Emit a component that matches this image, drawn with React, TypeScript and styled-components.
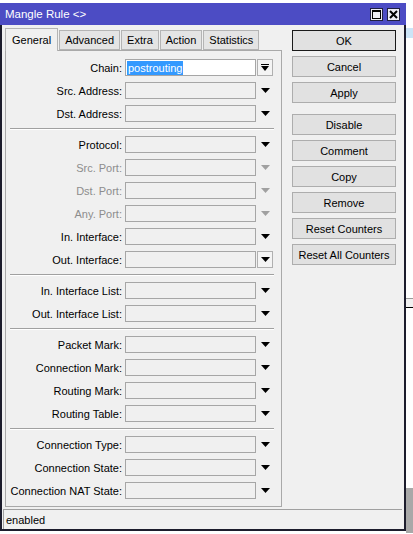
import React from 'react';
import styled, { createGlobalStyle } from 'styled-components';

const GlobalStyle = createGlobalStyle`
  html, body {
    margin: 0;
    padding: 0;
    background: #ffffff;
  }
  body {
    font-family: "Liberation Sans", Arial, sans-serif;
    font-size: 11px;
    color: #000;
  }
`;

const Page = styled.div`
  display: flex;
  flex-direction: row;
  align-items: flex-start;
  width: 413px;
  height: 534px;
  padding-top: 3px;
  box-sizing: border-box;
  overflow: hidden;
`;

const Window = styled.div`
  width: 406px;
  height: 528px;
  flex: none;
  display: flex;
  flex-direction: column;
  background: #f0f0f0;
  border: 2px solid #1c1c2c;
  border-top: none;
  box-sizing: border-box;
`;

const BackStrip = styled.div`
  flex: 1;
  display: flex;
  flex-direction: column;
  height: 531px;
`;

const StripPart = styled.div`
  height: ${({ $h }) => `${$h}px`};
  background: ${({ $bg }) => $bg};
  border-bottom: ${({ $line }) => ($line ? `1px solid ${$line}` : 'none')};
`;

const TitleBar = styled.div`
  height: 22px;
  flex: none;
  display: flex;
  align-items: center;
  justify-content: space-between;
  padding: 0 6px 0 5px;
  margin: 0 -2px;
  background: #4c4cc4;
  color: #fff;
  font-size: 11.5px;
`;

const TitleButtons = styled.div`
  display: flex;
  gap: 4px;
`;

const TitleButton = styled.div`
  width: 11px;
  height: 11px;
  background: #ececf4;
  border: 1px solid #202040;
  display: flex;
  align-items: center;
  justify-content: center;
`;

const Body = styled.div`
  flex: 1;
  display: flex;
  flex-direction: row;
  padding: 3px 8px 0 3px;
  gap: 10px;
`;

const LeftColumn = styled.div`
  width: 277px;
  display: flex;
  flex-direction: column;
`;

const TabStrip = styled.div`
  display: flex;
  align-items: flex-end;
  height: 22px;
`;

const Tab = styled.div`
  height: ${({ $active }) => ($active ? '23px' : '20px')};
  padding: 0 ${({ $active }) => ($active ? '6px' : '5px')};
  display: flex;
  align-items: center;
  box-sizing: border-box;
  background: ${({ $active }) => ($active ? '#f0f0f0' : '#e4e4e4')};
  border: 1px solid #b4b4b4;
  border-bottom: ${({ $active }) => ($active ? 'none' : '1px solid #b4b4b4')};
  margin-left: ${({ $active }) => ($active ? '0' : '1px')};
  position: relative;
  z-index: ${({ $active }) => ($active ? 2 : 1)};
  margin-bottom: ${({ $active }) => ($active ? '-1px' : '0')};
  font-size: 11px;
`;

const Panel = styled.div`
  height: 457px;
  box-sizing: border-box;
  border: 1px solid #a9a9a9;
  padding-top: 8px;
  display: flex;
  flex-direction: column;
`;

const Section = styled.div`
  display: flex;
  flex-direction: column;
  gap: 6px;
`;

const Separator = styled.div`
  margin: 6px 0 6px 4px;
  width: 264px;
  height: 1px;
  background: #a0a0a0;
  border-bottom: 1px solid #ffffff;
`;

const Row = styled.div`
  display: flex;
  align-items: center;
  height: 17px;
`;

const Label = styled.div`
  width: 119px;
  text-align: right;
  padding-right: 3px;
  box-sizing: border-box;
  white-space: nowrap;
  font-size: 11px;
  color: ${({ $disabled }) => ($disabled ? '#8d8d8d' : '#000')};
`;

const Input = styled.div`
  width: 131px;
  height: 17px;
  box-sizing: border-box;
  border: 1px solid #a6a6a6;
  background: ${({ $white }) => ($white ? '#ffffff' : '#f0f0f0')};
  display: flex;
  align-items: center;
  padding-left: 1px;
`;

const Selected = styled.span`
  background: #3399ff;
  color: #fff;
  font-size: 11px;
  line-height: 14px;
  padding: 0 1px;
`;

const ArrowCell = styled.div`
  height: 17px;
  display: flex;
  align-items: center;
  justify-content: center;
  margin-left: ${({ $boxed }) => ($boxed ? '1px' : '0')};
  box-sizing: border-box;
  border: ${({ $boxed }) => ($boxed ? '1px solid #b0b0b0' : 'none')};
  width: ${({ $boxed }) => ($boxed ? '16px' : '18px')};
  background: ${({ $boxed }) => ($boxed ? '#f4f4f4' : 'transparent')};
`;

const ButtonColumn = styled.div`
  width: 104px;
  display: flex;
  flex-direction: column;
  gap: 5px;
  padding-top: 2px;
`;

const Button = styled.div`
  height: 21px;
  box-sizing: border-box;
  display: flex;
  align-items: center;
  justify-content: center;
  background: #e1e1e1;
  border: 1px solid ${({ $default }) => ($default ? '#1a1a1a' : '#adadad')};
  margin-top: ${({ $gapBefore }) => ($gapBefore ? '6px' : '0')};
  font-size: 11px;
`;

const StatusBar = styled.div`
  height: 20px;
  flex: none;
  display: flex;
  align-items: center;
  margin: 1px 2px 0 1px;
  padding-left: 2px;
  border-top: 1px solid #a0a0a0;
  border-left: 1px solid #a0a0a0;
  box-sizing: border-box;
  font-size: 11px;
`;

const Arrow = ({ color = '#000' }) => (
  <svg width="9" height="5" viewBox="0 0 9 5">
    <polygon points="0,0 9,0 4.5,5" fill={color} />
  </svg>
);

const BarArrow = () => (
  <svg width="8" height="8" viewBox="0 0 8 8">
    <rect x="0" y="0" width="8" height="1" fill="#000" />
    <polygon points="0,2 8,2 4,7" fill="#000" />
  </svg>
);

const sections = [
  [
    { label: 'Chain', value: 'postrouting', chain: true },
    { label: 'Src. Address' },
    { label: 'Dst. Address' },
  ],
  [
    { label: 'Protocol' },
    { label: 'Src. Port', disabled: true },
    { label: 'Dst. Port', disabled: true },
    { label: 'Any. Port', disabled: true },
    { label: 'In. Interface' },
    { label: 'Out. Interface', boxed: true },
  ],
  [{ label: 'In. Interface List' }, { label: 'Out. Interface List' }],
  [
    { label: 'Packet Mark' },
    { label: 'Connection Mark' },
    { label: 'Routing Mark' },
    { label: 'Routing Table' },
  ],
  [
    { label: 'Connection Type' },
    { label: 'Connection State' },
    { label: 'Connection NAT State' },
  ],
];

const tabs = ['General', 'Advanced', 'Extra', 'Action', 'Statistics'];

const buttons = [
  'OK',
  'Cancel',
  'Apply',
  'Disable',
  'Comment',
  'Copy',
  'Remove',
  'Reset Counters',
  'Reset All Counters',
];

const App = () => {
  return (
    <>
      <GlobalStyle />
      <Page>
        <Window>
          <TitleBar>
            <span>Mangle Rule &lt;&gt;</span>
            <TitleButtons>
              <TitleButton>
                <svg width="9" height="9" viewBox="0 0 9 9">
                  <rect x="0.5" y="0.5" width="8" height="8" fill="none" stroke="#000" />
                  <rect x="0" y="0" width="9" height="2" fill="#000" />
                </svg>
              </TitleButton>
              <TitleButton>
                <svg width="9" height="9" viewBox="0 0 9 9">
                  <path d="M1 1 L8 8 M8 1 L1 8" stroke="#000" strokeWidth="2" />
                </svg>
              </TitleButton>
            </TitleButtons>
          </TitleBar>
          <Body>
            <LeftColumn>
              <TabStrip>
                {tabs.map((t, i) => (
                  <Tab key={t} $active={i === 0}>
                    {t}
                  </Tab>
                ))}
              </TabStrip>
              <Panel>
                {sections.map((rows, si) => (
                  <React.Fragment key={si}>
                    {si > 0 && <Separator />}
                    <Section>
                      {rows.map((r) => (
                        <Row key={r.label}>
                          <Label $disabled={r.disabled}>{r.label}:</Label>
                          <Input $white={r.chain}>
                            {r.value && <Selected>{r.value}</Selected>}
                          </Input>
                          <ArrowCell $boxed={r.chain || r.boxed}>
                            {r.chain ? <BarArrow /> : <Arrow color={r.disabled ? '#a0a0a0' : '#000'} />}
                          </ArrowCell>
                        </Row>
                      ))}
                    </Section>
                  </React.Fragment>
                ))}
              </Panel>
            </LeftColumn>
            <ButtonColumn>
              {buttons.map((b, i) => (
                <Button key={b} $default={i === 0} $gapBefore={b === 'Disable'}>
                  {b}
                </Button>
              ))}
            </ButtonColumn>
          </Body>
          <StatusBar>enabled</StatusBar>
        </Window>
        <BackStrip>
          <StripPart $h={25} $bg="#ffffff" />
          <StripPart $h={10} $bg="#cce4f7" />
          <StripPart $h={260} $bg="#ffffff" $line="#9a9a9a" />
          <StripPart $h={8} $bg="#f0f0f0" $line="#000000" />
          <StripPart $h={180} $bg="#ffffff" />
          <StripPart $h={45} $bg="#a8a8a8" />
        </BackStrip>
      </Page>
    </>
  );
};

export default App;
